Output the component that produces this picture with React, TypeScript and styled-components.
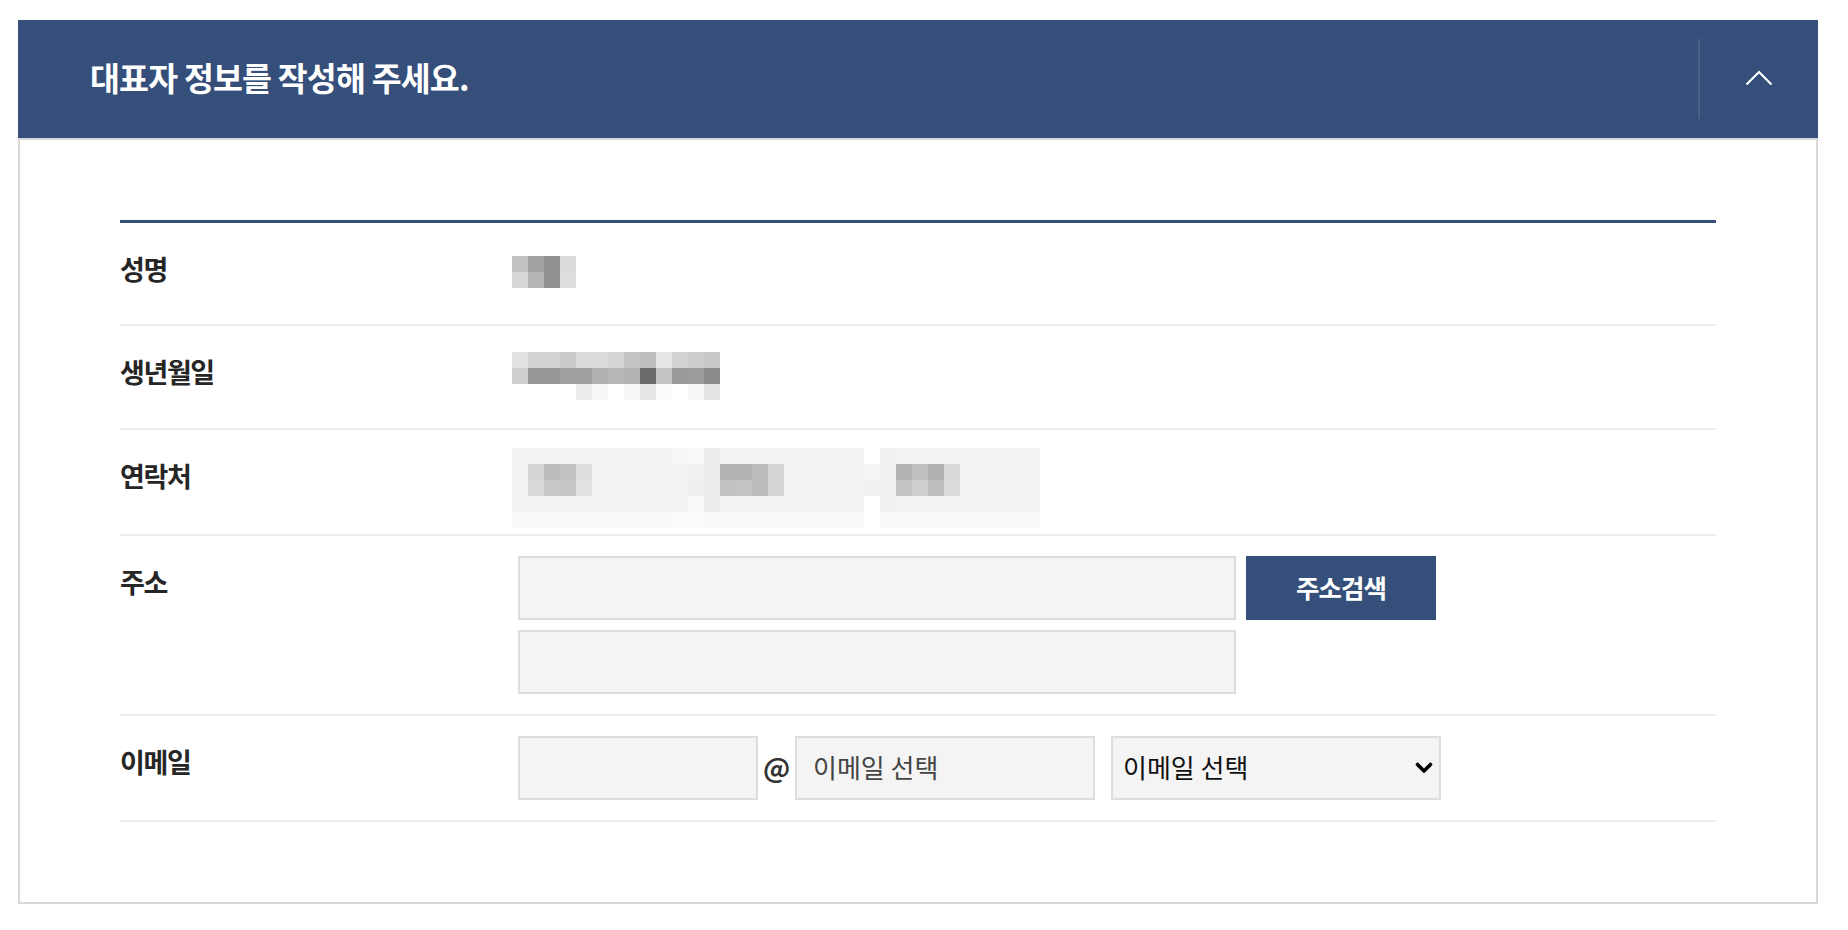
import { FC } from 'react'
import styled, { createGlobalStyle } from 'styled-components'

const NAVY = '#354f7a'
const FONT = '"Noto Sans CJK KR", "Noto Sans", "Liberation Sans", sans-serif'

const GlobalStyle = createGlobalStyle`
  html, body {
    margin: 0;
    padding: 0;
    background: #fff;
    font-family: ${FONT};
  }
  * {
    box-sizing: border-box;
  }
`

// pixelated (redacted) personal data, one array per mosaic row
const W = '#ffffff'
const NAME_MOSAIC = [
  ['#c2c2c2', '#a1a1a1', '#909090', '#dcdcdc'],
  ['#d8d8d8', '#b5b5b5', '#919191', '#dedede']
]

const BIRTH_MOSAIC = [
  ['#e2e2e2', '#d3d3d3', '#d3d3d3', '#cbcbcb', '#dcdcdc', '#dcdcdc', '#d5d5d5', '#c3c3c3', '#bdbdbd', '#e6e6e6', '#d2d2d2', '#cdcdcd', '#c9c9c9'],
  ['#cfcfcf', '#989898', '#989898', '#a0a0a0', '#a0a0a0', '#b0b0b0', '#b8b8b8', '#b3b3b3', '#6a6a6a', '#c5c5c5', '#9a9a9a', '#9c9c9c', '#8a8a8a'],
  [W, W, W, W, '#ededed', '#f7f7f7', W, '#f7f7f7', '#e6e6e6', '#fbfbfb', W, '#f7f7f7', '#e4e4e4']
]

const F = '#f3f3f3'
const L = '#fafafa'
const phoneSegment = (dark: string[], light: string[], edge: string): string[][] => [
  [edge, F, F, F, F, F, F, F, F, F],
  [edge, ...dark, F, F, F, F, F],
  [edge, ...light, F, F, F, F, F],
  [edge, F, F, F, F, F, F, F, F, F],
  [L, L, L, L, L, L, L, L, L, L]
]
const seg1 = phoneSegment(['#d6d6d6', '#bcbcbc', '#c2c2c2', '#dedede'], ['#d9d9d9', '#c8c8c8', '#c6c6c6', '#e2e2e2'], F)
const seg2 = phoneSegment(['#b3b3b3', '#b3b3b3', '#bbbbbb', '#d4d4d4'], ['#c2c2c2', '#c4c4c4', '#bcbcbc', '#d6d6d6'], '#ededed')
const seg3 = phoneSegment(['#b4b4b4', '#bfbfbf', '#b0b0b0', '#d9d9d9'], ['#c4c4c4', '#cfcfcf', '#bdbdbd', '#dcdcdc'], '#f0f0f0')
const gapA = [
  ['#f7f7f7', L],
  [F, '#f1f1f1'],
  ['#f2f2f2', '#efefef'],
  [F, L],
  ['#fbfbfb', '#fcfcfc']
]
const gapB = [[W], ['#f5f5f5'], ['#f1f1f1'], [W], [W]]
const PHONE_MOSAIC = seg1.map((row, i) => [...row, ...gapA[i], ...seg2[i], ...gapB[i], ...seg3[i]])

const Mosaic: FC<{ rows: string[][]; top: number }> = ({ rows, top }) => (
  <MosaicGrid $cols={rows[0].length} $top={top}>
    {rows.flat().map((c, i) => (
      <MosaicCell key={i} $c={c} />
    ))}
  </MosaicGrid>
)

const ChevronUp = () => (
  <svg width="28" height="17" viewBox="0 0 28 17" fill="none">
    <polyline points="1.5,15.5 14,3 26.5,15.5" stroke="#fff" strokeWidth="2.2" />
  </svg>
)

const ChevronDown = () => (
  <svg width="18" height="12" viewBox="0 0 18 12" fill="none">
    <polyline points="2.5,2.5 9,9 15.5,2.5" stroke="#000" strokeWidth="3.6" strokeLinecap="round" strokeLinejoin="round" />
  </svg>
)

const App: FC = () => {
  return (
    <>
      <GlobalStyle />
      <Panel>
        <Header>
          <Title>대표자 정보를 작성해 주세요.</Title>
          <Divider />
          <ToggleButton type="button" aria-label="접기">
            <ChevronUp />
          </ToggleButton>
        </Header>
        <Body>
          <FormTable>
            <Row>
              <Label>성명</Label>
              <Value $h={61}>
                <Mosaic rows={NAME_MOSAIC} top={13} />
              </Value>
            </Row>
            <Row>
              <Label>생년월일</Label>
              <Value $h={62}>
                <Mosaic rows={BIRTH_MOSAIC} top={6} />
              </Value>
            </Row>
            <Row>
              <Label>연락처</Label>
              <Value $h={64}>
                <Mosaic rows={PHONE_MOSAIC} top={-2} />
              </Value>
            </Row>
            <Row>
              <Label>주소</Label>
              <Value $h={64}>
                <FieldLine>
                  <TextInput $w={718} />
                  <SearchButton type="button">주소검색</SearchButton>
                </FieldLine>
                <FieldLine>
                  <TextInput $w={718} />
                </FieldLine>
              </Value>
            </Row>
            <Row>
              <Label>이메일</Label>
              <Value $h={64}>
                <FieldLine>
                  <TextInput $w={240} />
                  <At>@</At>
                  <TextInput $w={300} placeholder="이메일 선택" />
                  <SelectWrap>
                    <Select defaultValue="">
                      <option value="">이메일 선택</option>
                      <option value="naver.com">naver.com</option>
                      <option value="gmail.com">gmail.com</option>
                      <option value="daum.net">daum.net</option>
                    </Select>
                    <SelectArrow>
                      <ChevronDown />
                    </SelectArrow>
                  </SelectWrap>
                </FieldLine>
              </Value>
            </Row>
          </FormTable>
        </Body>
      </Panel>
    </>
  )
}

const Panel = styled.section`
  width: 1800px;
  margin: 20px 0 0 18px;
`

const Header = styled.header`
  display: flex;
  align-items: center;
  height: 118px;
  background: ${NAVY};
`

const Title = styled.h2`
  flex: 1;
  margin: 0 0 5px;
  padding-left: 72px;
  font-size: 32.5px;
  font-weight: 700;
  letter-spacing: -0.8px;
  color: #fff;
`

const Divider = styled.span`
  width: 2px;
  height: 80px;
  background: #4a6189;
`

const ToggleButton = styled.button`
  display: flex;
  align-items: center;
  justify-content: center;
  width: 118px;
  height: 118px;
  padding: 0 0 4px;
  border: 0;
  background: transparent;
  cursor: pointer;
`

const Body = styled.div`
  padding: 80px 100px;
  border: 2px solid #d8d8d8;
`

const FormTable = styled.div`
  border-top: 3px solid ${NAVY};
`

const Row = styled.div`
  display: flex;
  padding: 20px 0;
  border-bottom: 2px solid #ececec;
`

const Label = styled.div`
  flex-shrink: 0;
  width: 398px;
  font-size: 27px;
  font-weight: 700;
  line-height: 52px;
  letter-spacing: -1.4px;
  color: #262626;
`

const Value = styled.div<{ $h: number }>`
  display: flex;
  flex-direction: column;
  gap: 10px;
  min-height: ${p => p.$h}px;
`

const MosaicGrid = styled.div<{ $cols: number; $top: number }>`
  display: grid;
  grid-template-columns: repeat(${p => p.$cols}, 16px);
  grid-auto-rows: 16px;
  margin: ${p => p.$top}px 0 0 -6px;
  height: 0;
  overflow: visible;
`

const MosaicCell = styled.span<{ $c: string }>`
  background: ${p => p.$c};
`

const FieldLine = styled.div`
  display: flex;
  align-items: center;
`

const TextInput = styled.input<{ $w: number }>`
  width: ${p => p.$w}px;
  height: 64px;
  padding: 0 16px 3px;
  border: 2px solid #dddddd;
  background: #f4f4f4;
  font-family: ${FONT};
  font-size: 26px;
  color: #444;
  outline: none;
  &::placeholder {
    color: #444;
  }
`

const SearchButton = styled.button`
  width: 190px;
  height: 64px;
  margin-left: 10px;
  padding: 0 0 4px;
  border: 0;
  background: ${NAVY};
  font-family: ${FONT};
  font-size: 25.5px;
  font-weight: 700;
  letter-spacing: -1px;
  color: #fff;
  cursor: pointer;
`

const At = styled.span`
  width: 37px;
  padding-bottom: 3px;
  text-align: center;
  font-size: 27px;
  font-weight: 700;
  color: #333;
`

const SelectWrap = styled.div`
  position: relative;
  width: 330px;
  margin-left: 16px;
`

const Select = styled.select`
  width: 100%;
  height: 64px;
  padding: 0 40px 3px 10px;
  border: 2px solid #dddddd;
  border-radius: 0;
  background: #f4f4f4;
  font-family: ${FONT};
  font-size: 26px;
  color: #111;
  appearance: none;
  outline: none;
`

const SelectArrow = styled.span`
  position: absolute;
  top: 26px;
  right: 8px;
  display: flex;
  pointer-events: none;
`

export default App
